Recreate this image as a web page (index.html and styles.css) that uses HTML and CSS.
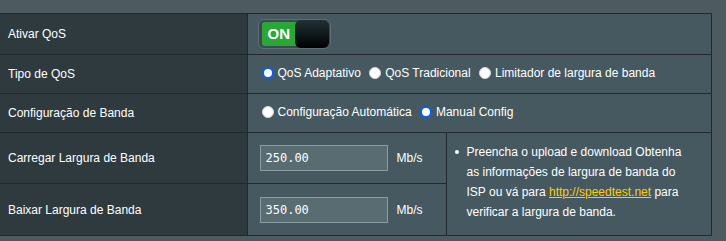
FILE: index.html
```html
<!DOCTYPE html>
<html lang="pt">
<head>
    <meta charset="UTF-8">
    <title>QoS</title>
    <link rel="stylesheet" href="styles.css">
</head>
<body>
    <table class="qos-table">
        <colgroup>
            <col class="col-label">
            <col class="col-value">
            <col class="col-info">
        </colgroup>
        <tr class="row-switch">
            <th>Ativar QoS</th>
            <td colspan="2">
                <div class="toggle">
                    <span class="toggle-on">ON</span>
                    <span class="toggle-knob"></span>
                </div>
            </td>
        </tr>
        <tr class="row-radio">
            <th>Tipo de QoS</th>
            <td colspan="2">
                <label class="radio"><input type="radio" name="qos" checked>QoS Adaptativo</label>
                <label class="radio"><input type="radio" name="qos">QoS Tradicional</label>
                <label class="radio"><input type="radio" name="qos">Limitador de largura de banda</label>
            </td>
        </tr>
        <tr class="row-radio">
            <th>Configuração de Banda</th>
            <td colspan="2">
                <label class="radio"><input type="radio" name="bw">Configuração Automática</label>
                <label class="radio"><input type="radio" name="bw" checked>Manual Config</label>
            </td>
        </tr>
        <tr class="row-input row-upload">
            <th>Carregar Largura de Banda</th>
            <td>
                <input class="speed" type="text" value="250.00"><span class="unit">Mb/s</span>
            </td>
            <td rowspan="2" class="info">
                <ul>
                    <li>Preencha o upload e download Obtenha as informações de largura de banda do ISP ou vá para <a href="#">http://speedtest.net</a> para verificar a largura de banda.</li>
                </ul>
            </td>
        </tr>
        <tr class="row-input row-download">
            <th>Baixar Largura de Banda</th>
            <td>
                <input class="speed" type="text" value="350.00"><span class="unit">Mb/s</span>
            </td>
        </tr>
    </table>
</body>
</html>
```

FILE: styles.css
```css
* {
    margin: 0;
    padding: 0;
    box-sizing: border-box;
}

body {
    background: #4d5a5f;
    font-family: 'Liberation Sans', Arial, sans-serif;
    font-size: 12px;
    color: #fff;
    padding-top: 13px;
}

.qos-table {
    border-collapse: collapse;
    table-layout: fixed;
    width: 711px;
}

.col-label { width: 247px; }
.col-value { width: 199px; }
.col-info { width: 265px; }

.qos-table th,
.qos-table td {
    border: 1px solid #22292c;
    vertical-align: middle;
}

.qos-table th:first-child {
    border-left: none;
}

.qos-table th {
    background: #2f3a3f;
    text-align: left;
    font-weight: normal;
    padding-left: 8px;
}

.qos-table td {
    background: #475960;
}

.row-switch { height: 41px; }
.row-radio { height: 39px; }
.row-upload { height: 51px; }
.row-download { height: 52px; }

/* toggle switch */
.toggle {
    margin-left: 10px;
    width: 73px;
    height: 30px;
    border: 1px solid #5f6e73;
    border-radius: 6px;
    background: #3c4a4f;
    display: flex;
    align-items: center;
    padding: 1px;
}

.toggle-on {
    background: #2aa737;
    height: 24px;
    width: 38px;
    margin-left: 2px;
    border-radius: 3px 0 0 3px;
    font-weight: bold;
    font-size: 15px;
    line-height: 24px;
    padding-left: 6px;
}

.toggle-knob {
    width: 35px;
    height: 28px;
    margin-left: -3px;
    border-radius: 6px;
    background: linear-gradient(to bottom, #213136, #000);
}

/* radios */
.row-radio td {
    padding-left: 14px;
}

.radio {
    display: inline-flex;
    align-items: center;
    margin-right: 5px;
}

.radio input {
    appearance: none;
    -webkit-appearance: none;
    width: 12px;
    height: 12px;
    border-radius: 50%;
    background: #fff;
    border: 1px solid #d8d8d8;
    margin-right: 4px;
}

.radio input:checked {
    border: 2px solid #0a5ff0;
}

/* speed inputs */
.row-input td:not(.info) {
    padding-left: 12px;
}

.speed {
    width: 128px;
    height: 26px;
    background: #596c72;
    border: 1px solid #8c9ea3;
    color: #fff;
    font-family: 'DejaVu Sans Mono', monospace;
    font-size: 12px;
    padding-left: 5px;
    vertical-align: middle;
}

.unit {
    margin-left: 9px;
    vertical-align: middle;
}

/* info box */
.info {
    padding: 0 22px 4px 7px;
    line-height: 20px;
}

.info ul {
    list-style: none;
}

.info li {
    position: relative;
    padding-left: 13px;
}

.info li::before {
    content: '';
    position: absolute;
    left: 1px;
    top: 8px;
    width: 4px;
    height: 4px;
    border-radius: 50%;
    background: #fff;
}

.info a {
    color: #ffcc00;
    text-decoration: underline;
}
```
